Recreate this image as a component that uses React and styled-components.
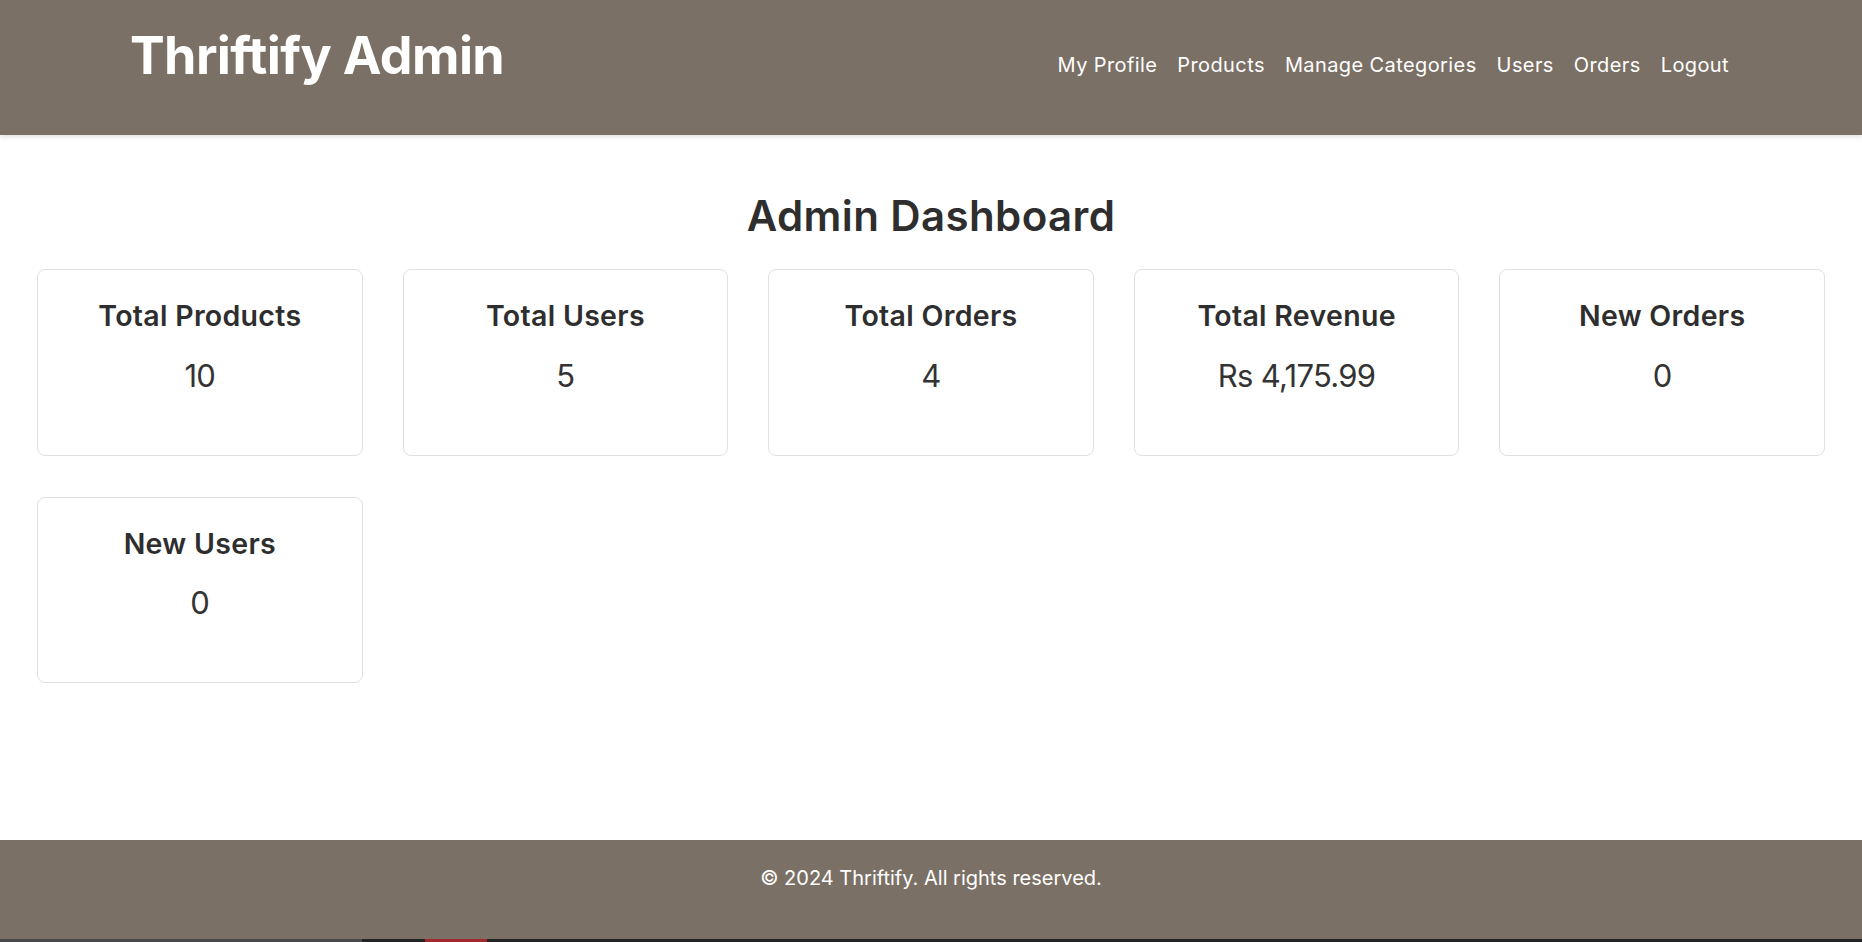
import React from "react";
import styled, { createGlobalStyle } from "styled-components";

const GlobalStyle = createGlobalStyle`
  * { box-sizing: border-box; }
  html, body { margin: 0; padding: 0; background: #ffffff; }
  body { font-family: Inter, "Noto Sans", "Liberation Sans", sans-serif; color: #333333; }
`;

const Page = styled.div`
  min-height: 100vh;
  display: flex;
  flex-direction: column;
`;

const Header = styled.header`
  height: 135px;
  background: #7b7065;
  box-shadow: 0 2px 5px rgba(0, 0, 0, 0.12);
  display: flex;
  justify-content: space-between;
  align-items: flex-start;
  padding: 0 133px 0 130px;
  position: relative;
  z-index: 1;
`;

const Brand = styled.h1`
  margin: 30px 0 0;
  font-size: 52px;
  line-height: 1;
  font-weight: 700;
  color: #ffffff;
  letter-spacing: -0.6px;
`;

const Nav = styled.nav`
  margin-top: 55px;
  display: flex;
  gap: 20px;
`;

const NavLink = styled.a`
  font-size: 20px;
  line-height: 1;
  color: #ffffff;
  text-decoration: none;
  letter-spacing: 0.4px;
  cursor: pointer;
`;

const Main = styled.main`
  flex: 1;
  padding: 0 37px;
`;

const Title = styled.h2`
  margin: 60px 0 32px;
  text-align: center;
  font-size: 42px;
  line-height: 1;
  font-weight: 600;
  color: #2e2e2e;
  letter-spacing: 0.4px;
`;

const StatGrid = styled.div`
  display: grid;
  grid-template-columns: repeat(5, 1fr);
  gap: 41px 40px;
`;

const Card = styled.div`
  border: 1px solid #e0e0e0;
  border-radius: 8px;
  padding: 32px 16px 64px;
  text-align: center;
  background: #ffffff;
`;

const CardLabel = styled.h3`
  margin: 0 0 29px;
  font-size: 28.5px;
  line-height: 1;
  font-weight: 600;
  color: #2e2e2e;
  letter-spacing: 0.3px;
`;

const CardValue = styled.p`
  margin: 0;
  font-size: 31px;
  line-height: 1;
  font-weight: 400;
  color: #333333;
  letter-spacing: -0.7px;
`;

const Footer = styled.footer`
  height: 99px;
  background: #7b7065;
  padding-top: 28px;
  text-align: center;
`;

const FooterText = styled.p`
  margin: 0;
  font-size: 20px;
  line-height: 1;
  color: #ffffff;
`;

const ScreenEdge = styled.div`
  height: 3px;
  background: linear-gradient(
    to right,
    #4a4a4a 0,
    #4a4a4a 362px,
    #232323 362px,
    #232323 425px,
    #a3282e 425px,
    #a3282e 487px,
    #232323 487px
  );
`;

const navItems = ["My Profile", "Products", "Manage Categories", "Users", "Orders", "Logout"];

const stats = [
  { label: "Total Products", value: "10" },
  { label: "Total Users", value: "5" },
  { label: "Total Orders", value: "4" },
  { label: "Total Revenue", value: "Rs 4,175.99" },
  { label: "New Orders", value: "0" },
  { label: "New Users", value: "0" },
];

export default function App() {
  return (
    <>
      <GlobalStyle />
      <Page>
        <Header>
          <Brand>Thriftify Admin</Brand>
          <Nav>
            {navItems.map((item) => (
              <NavLink key={item}>{item}</NavLink>
            ))}
          </Nav>
        </Header>
        <Main>
          <Title>Admin Dashboard</Title>
          <StatGrid>
            {stats.map((s) => (
              <Card key={s.label}>
                <CardLabel>{s.label}</CardLabel>
                <CardValue>{s.value}</CardValue>
              </Card>
            ))}
          </StatGrid>
        </Main>
        <Footer>
          <FooterText>© 2024 Thriftify. All rights reserved.</FooterText>
        </Footer>
        <ScreenEdge />
      </Page>
    </>
  );
}
